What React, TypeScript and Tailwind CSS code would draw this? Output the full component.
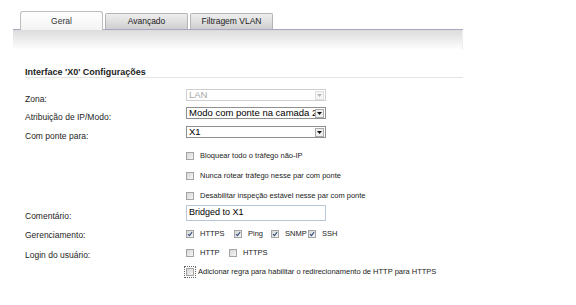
import type { ReactNode } from "react";

function Tab({ label, active }: { label: string; active?: boolean }) {
  return active ? (
    <div className="relative z-10 -mb-px flex h-[19px] w-[83px] items-center justify-center rounded-t-[3px] border border-b-0 border-[#bdbdbd] bg-gradient-to-b from-white to-[#f3f3f3] text-[8.5px] text-[#333]">
      {label}
    </div>
  ) : (
    <div className="flex h-[16px] w-[83px] items-center justify-center rounded-t-[2px] border border-b-0 border-[#b4b4b4] bg-gradient-to-b from-[#efefef] to-[#cfcfcf] text-[8.5px] text-[#222]">
      {label}
    </div>
  );
}

function Checkbox({ checked, focused }: { checked?: boolean; focused?: boolean }) {
  const box = (
    <span className="relative block h-[8px] w-[8px] shrink-0 border border-[#a4a4a4] bg-gradient-to-br from-[#d6d6d6] to-[#f6f6f6]">
      {checked ? (
        <svg viewBox="0 0 6 6" className="absolute inset-0 h-full w-full">
          <path d="M1 3.1 L2.5 4.6 L5.1 1.2" fill="none" stroke="#34527c" strokeWidth="1.1" />
        </svg>
      ) : null}
    </span>
  );
  if (!focused) return box;
  return (
    <span className="-ml-[2px] block border border-dotted border-[#666] p-[1px]">{box}</span>
  );
}

function Select({ value, disabled }: { value: string; disabled?: boolean }) {
  return (
    <div
      className={`flex h-[12px] w-[140px] items-center overflow-hidden border ${
        disabled ? "border-[#cfcfcf] text-[#a9a9a9]" : "border-[#8f8f8f] text-black"
      } bg-white`}
    >
      <span className="flex-1 overflow-hidden whitespace-nowrap pl-[2px] text-[9.5px] leading-[10px]">
        {value}
      </span>
      <span
        className={`mr-px flex h-[9px] w-[9px] shrink-0 items-center justify-center border ${
          disabled ? "border-[#dedede] bg-[#f6f6f6]" : "border-[#a9a9a9] bg-[#efefef]"
        }`}
      >
        <svg viewBox="0 0 5 3" className="h-[3px] w-[5px]">
          <path d="M0 0 L5 0 L2.5 3 Z" fill={disabled ? "#b8b8b8" : "#111"} />
        </svg>
      </span>
    </div>
  );
}

function Row({
  label,
  labelOffset = 8,
  height,
  top,
  children,
}: {
  label?: string;
  labelOffset?: number;
  height: string;
  top: string;
  children: ReactNode;
}) {
  const pad =
    labelOffset === 8 ? "pt-[8px]" : labelOffset === 6 ? "pt-[6px]" : labelOffset === 4 ? "pt-[4px]" : "pt-[2px]";
  return (
    <div className={`flex items-center ${height} ${top}`}>
      <div className={`w-[161px] shrink-0 text-[8.5px] leading-[10px] text-[#1d1d1d] ${pad}`}>{label}</div>
      {children}
    </div>
  );
}

function CheckLine({ text, checked, focused }: { text: string; checked?: boolean; focused?: boolean }) {
  return (
    <div className="flex items-center">
      <Checkbox checked={checked} focused={focused} />
      <span className={`${focused ? "ml-[2px]" : "ml-[6px]"} whitespace-nowrap text-[7.5px] text-[#222]`}>
        {text}
      </span>
    </div>
  );
}

export default function App() {
  return (
    <div className="h-[305px] w-[576px] overflow-hidden bg-white font-['Liberation_Sans',Arial,sans-serif]">
      <div className="w-[463px] pl-[13px] pt-[11px]">
        <div className="flex items-end gap-[2px] pl-[7px]">
          <Tab label="Geral" active />
          <Tab label="Avançado" />
          <Tab label="Filtragem VLAN" />
        </div>
        <div className="h-px bg-[#a9a7bf]" />
        <div className="h-[20px] border-r border-[#eeeeee] bg-gradient-to-b from-[#dcdcdc] to-white" />
      </div>

      <div className="w-[463px] pl-[25px]">
        <div className="mt-[16px] border-b border-[#e4e4e4] pt-[2px] text-[9px] font-bold leading-[9px] text-[#222]">
          Interface 'X0' Configurações
        </div>

        <Row label="Zona:" height="h-[12px]" top="mt-[11px]">
          <Select value="LAN" disabled />
        </Row>
        <Row label="Atribuição de IP/Modo:" height="h-[12px]" top="mt-[6px]">
          <Select value="Modo com ponte na camada 2" />
        </Row>
        <Row label="Com ponte para:" height="h-[12px]" top="mt-[7px]">
          <Select value="X1" />
        </Row>

        <Row height="h-[10px]" top="mt-[13px]">
          <CheckLine text="Bloquear todo o tráfego não-IP" />
        </Row>
        <Row height="h-[10px]" top="mt-[10px]">
          <CheckLine text="Nunca rotear tráfego nesse par com ponte" />
        </Row>
        <Row height="h-[10px]" top="mt-[10px]">
          <CheckLine text="Desabilitar inspeção estável nesse par com ponte" />
        </Row>

        <Row label="Comentário:" labelOffset={6} height="h-[16px]" top="mt-[4px]">
          <div className="flex h-[16px] w-[140px] items-center border border-[#b7c7d8] bg-white pl-[2px] text-[9px] text-black">
            Bridged to X1
          </div>
        </Row>

        <Row label="Gerenciamento:" labelOffset={2} height="h-[10px]" top="mt-[8px]">
          <div className="flex items-center">
            <div className="w-[48px]">
              <CheckLine text="HTTPS" checked />
            </div>
            <div className="w-[37px]">
              <CheckLine text="Ping" checked />
            </div>
            <div className="w-[37px]">
              <CheckLine text="SNMP" checked />
            </div>
            <CheckLine text="SSH" checked />
          </div>
        </Row>

        <Row label="Login do usuário:" labelOffset={4} height="h-[10px]" top="mt-[9px]">
          <div className="flex items-center">
            <div className="w-[43px]">
              <CheckLine text="HTTP" />
            </div>
            <CheckLine text="HTTPS" />
          </div>
        </Row>

        <Row height="h-[12px]" top="mt-[8px]">
          <CheckLine text="Adicionar regra para habilitar o redirecionamento de HTTP para HTTPS" focused />
        </Row>
      </div>
    </div>
  );
}
